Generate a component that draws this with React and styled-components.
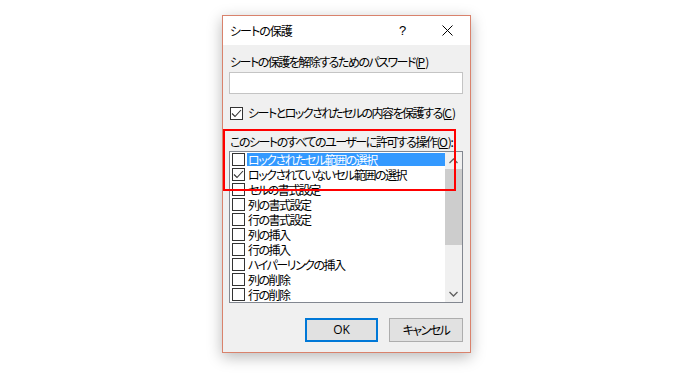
import React from "react";
import styled, { createGlobalStyle } from "styled-components";

const Global = createGlobalStyle`
  html, body { margin: 0; padding: 0; background: #ffffff; }
  body {
    font-family: "Noto Sans CJK JP", "Noto Sans", sans-serif;
    font-size: 12px;
    color: #000;
    font-feature-settings: "palt";
    letter-spacing: -1.5px;
  }
  * { box-sizing: border-box; }
`;

const Page = styled.div`
  width: 698px;
  height: 375px;
  padding: 15px 0 0 222px;
`;

const Dialog = styled.div`
  position: relative;
  width: 249px;
  height: 338px;
  background: #f0f0f0;
  border: 1px solid #d9826c;
  box-shadow: 0 4px 14px rgba(0, 0, 0, 0.28);
  display: flex;
  flex-direction: column;
`;

const TitleBar = styled.div`
  height: 29px;
  background: #ffffff;
  display: flex;
  align-items: center;
  padding-left: 7px;
`;

const TitleText = styled.div`
  flex: 1;
  font-size: 12px;
  line-height: 16px;
  letter-spacing: -1px;
`;

const TitleButton = styled.div`
  width: 45px;
  height: 29px;
  display: flex;
  align-items: center;
  justify-content: center;
  font-family: "Liberation Sans", sans-serif;
  font-size: 13px;
  letter-spacing: 0;
`;

const Body = styled.div`
  flex: 1;
  display: flex;
  flex-direction: column;
  padding: 9px 7px 10px 6px;
`;

const Label = styled.div`
  font-size: 12px;
  line-height: 16px;
  margin-top: ${(p) => p.$mt || 0}px;
  padding-left: 1px;
  white-space: nowrap;
`;

const U = styled.span`
  text-decoration: underline;
  text-underline-offset: 1px;
  letter-spacing: 0;
`;

const Input = styled.div`
  margin-top: 2px;
  height: 22px;
  background: #ffffff;
  border: 1px solid #c4c4c4;
`;

const CheckRow = styled.div`
  display: flex;
  align-items: center;
  gap: 5px;
  height: 16px;
  margin-top: 11px;
  padding-left: 1px;
  line-height: 16px;
  white-space: nowrap;
`;

const Box = styled.div`
  flex: none;
  width: 13px;
  height: 13px;
  background: #ffffff;
  border: 1px solid #333333;
  display: flex;
  align-items: center;
  justify-content: center;
`;

const ListBox = styled.div`
  margin-top: 1px;
  height: 152px;
  background: #ffffff;
  border: 1px solid #828790;
  display: flex;
`;

const Items = styled.div`
  flex: 1;
  display: flex;
  flex-direction: column;
`;

const Item = styled.div`
  height: 15px;
  display: flex;
  align-items: center;
  padding-left: 2px;
`;

const ItemText = styled.div`
  flex: 1;
  height: 15px;
  margin-left: 2px;
  padding-left: 1px;
  line-height: 15px;
  white-space: nowrap;
  background: ${(p) =>
    p.$sel
      ? "linear-gradient(transparent 1px, #3399ff 1px, #3399ff 14px, transparent 14px)"
      : "transparent"};
  color: ${(p) => (p.$sel ? "#ffffff" : "#000000")};
`;

const ScrollBar = styled.div`
  width: 17px;
  background: #f0f0f0;
  display: flex;
  flex-direction: column;
`;

const Arrow = styled.div`
  height: 17px;
  display: flex;
  align-items: center;
  justify-content: center;
`;

const Track = styled.div`
  flex: 1;
  display: flex;
  flex-direction: column;
`;

const Thumb = styled.div`
  height: 76px;
  background: #cdcdcd;
`;

const Buttons = styled.div`
  margin-top: 15px;
  display: flex;
  justify-content: flex-end;
  gap: 11px;
`;

const Button = styled.div`
  width: ${(p) => p.$w}px;
  height: 24px;
  display: flex;
  align-items: center;
  justify-content: center;
  background: #e1e1e1;
  border: ${(p) => (p.$primary ? "2px solid #0078d7" : "1px solid #adadad")};
  font-size: 12px;
  line-height: 16px;
  letter-spacing: ${(p) => (p.$primary ? "0" : "-1.5px")};
  font-family: ${(p) =>
    p.$primary ? '"Open Sans", "Noto Sans", sans-serif' : "inherit"};
`;

const Annotation = styled.div`
  position: absolute;
  left: 0px;
  top: 113px;
  width: 233px;
  height: 62px;
  border: 2px solid #ff0000;
  pointer-events: none;
`;

const Check = () => (
  <svg width="11" height="11" viewBox="0 0 11 11">
    <path d="M1 5.5 L4 8.5 L10 2" fill="none" stroke="#333" strokeWidth="1.1" />
  </svg>
);

const items = [
  { t: "ロックされたセル範囲の選択", c: false, s: true },
  { t: "ロックされていないセル範囲の選択", c: true },
  { t: "セルの書式設定" },
  { t: "列の書式設定" },
  { t: "行の書式設定" },
  { t: "列の挿入" },
  { t: "行の挿入" },
  { t: "ハイパーリンクの挿入" },
  { t: "列の削除" },
  { t: "行の削除" },
];

export default function App() {
  return (
    <>
      <Global />
      <Page>
        <Dialog>
          <TitleBar>
            <TitleText>シートの保護</TitleText>
            <TitleButton>?</TitleButton>
            <TitleButton>
              <svg width="11" height="11" viewBox="0 0 11 11">
                <path d="M0.5 0.5 L10.5 10.5 M10.5 0.5 L0.5 10.5" stroke="#000" strokeWidth="1" />
              </svg>
            </TitleButton>
          </TitleBar>
          <Body>
            <Label>
              シートの保護を解除するためのパスワード(<U>P</U>)
            </Label>
            <Input />
            <CheckRow>
              <Box>
                <Check />
              </Box>
              <span>
                シートとロックされたセルの内容を保護する(<U>C</U>)
              </span>
            </CheckRow>
            <Label $mt={13}>
              このシートのすべてのユーザーに許可する操作(<U>O</U>):
            </Label>
            <ListBox>
              <Items>
                {items.map((it) => (
                  <Item key={it.t}>
                    <Box>{it.c && <Check />}</Box>
                    <ItemText $sel={it.s}>{it.t}</ItemText>
                  </Item>
                ))}
              </Items>
              <ScrollBar>
                <Arrow>
                  <svg width="9" height="6" viewBox="0 0 9 6">
                    <path d="M0.5 5 L4.5 1 L8.5 5" fill="none" stroke="#606060" strokeWidth="1.3" />
                  </svg>
                </Arrow>
                <Track>
                  <Thumb />
                </Track>
                <Arrow>
                  <svg width="9" height="6" viewBox="0 0 9 6">
                    <path d="M0.5 1 L4.5 5 L8.5 1" fill="none" stroke="#606060" strokeWidth="1.3" />
                  </svg>
                </Arrow>
              </ScrollBar>
            </ListBox>
            <Buttons>
              <Button $w={73} $primary>OK</Button>
              <Button $w={74}>キャンセル</Button>
            </Buttons>
          </Body>
          <Annotation />
        </Dialog>
      </Page>
    </>
  );
}
